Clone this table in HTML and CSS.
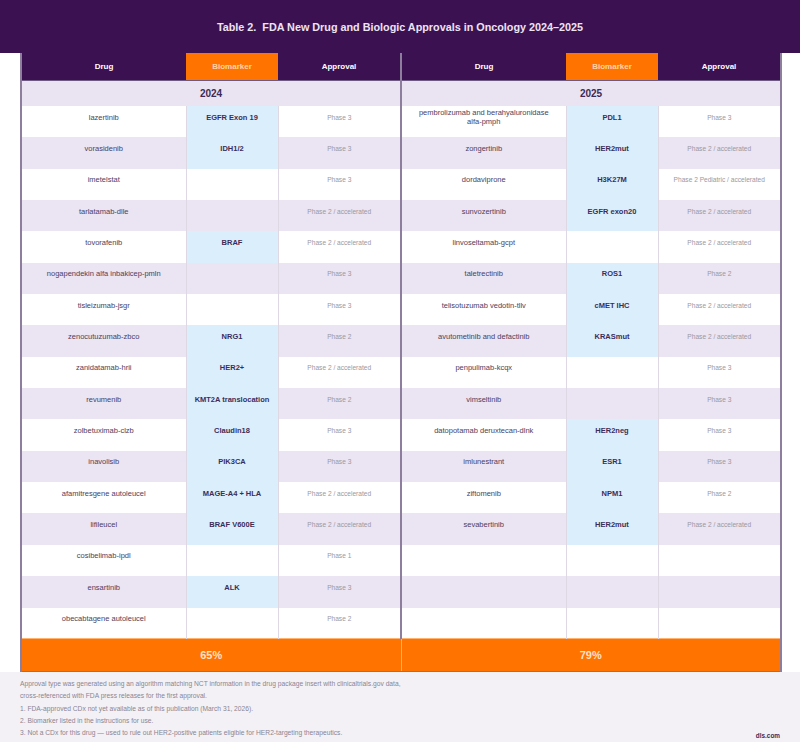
FILE: index.html
```html
<!DOCTYPE html>
<html lang="en">
<head>
<meta charset="utf-8">
<title>Table 2. FDA New Drug and Biologic Approvals in Oncology 2024–2025</title>
<link rel="stylesheet" href="styles.css">
</head>
<body>
<header class="banner">
  <h1 class="title">Table 2.&nbsp; FDA New Drug and Biologic Approvals in Oncology 2024–2025</h1>
</header>
<main class="wrap">
  <table class="approvals">
    <colgroup>
      <col class="c-drug"><col class="c-bio"><col class="c-appr">
      <col class="c-drug"><col class="c-bio"><col class="c-appr">
    </colgroup>
    <thead>
      <tr class="head">
        <th>Drug</th><th class="bio-h">Biomarker</th><th>Approval</th>
        <th class="split">Drug</th><th class="bio-h">Biomarker</th><th>Approval</th>
      </tr>
      <tr class="year">
        <th colspan="3">2024</th>
        <th colspan="3" class="split">2025</th>
      </tr>
    </thead>
    <tbody>
      <tr><td class="drug">lazertinib</td><td class="bio has">EGFR Exon 19</td><td class="appr">Phase 3</td>
          <td class="drug split">pembrolizumab and berahyaluronidase <span class="nowrap">alfa-pmph</span></td><td class="bio has">PDL1</td><td class="appr">Phase 3</td></tr>
      <tr><td class="drug">vorasidenib</td><td class="bio has">IDH1/2</td><td class="appr">Phase 3</td>
          <td class="drug split">zongertinib</td><td class="bio has">HER2mut</td><td class="appr">Phase 2 / accelerated</td></tr>
      <tr><td class="drug">imetelstat</td><td class="bio"></td><td class="appr">Phase 3</td>
          <td class="drug split">dordaviprone</td><td class="bio has">H3K27M</td><td class="appr">Phase 2 Pediatric / accelerated</td></tr>
      <tr><td class="drug">tarlatamab-dlle</td><td class="bio"></td><td class="appr">Phase 2 / accelerated</td>
          <td class="drug split">sunvozertinib</td><td class="bio has">EGFR exon20</td><td class="appr">Phase 2 / accelerated</td></tr>
      <tr><td class="drug">tovorafenib</td><td class="bio has">BRAF</td><td class="appr">Phase 2 / accelerated</td>
          <td class="drug split">linvoseltamab-gcpt</td><td class="bio"></td><td class="appr">Phase 2 / accelerated</td></tr>
      <tr><td class="drug">nogapendekin alfa inbakicep-pmln</td><td class="bio"></td><td class="appr">Phase 3</td>
          <td class="drug split">taletrectinib</td><td class="bio has">ROS1</td><td class="appr">Phase 2</td></tr>
      <tr><td class="drug">tisleizumab-jsgr</td><td class="bio"></td><td class="appr">Phase 3</td>
          <td class="drug split">telisotuzumab vedotin-tllv</td><td class="bio has">cMET IHC</td><td class="appr">Phase 2 / accelerated</td></tr>
      <tr><td class="drug">zenocutuzumab-zbco</td><td class="bio has">NRG1</td><td class="appr">Phase 2</td>
          <td class="drug split">avutometinib and defactinib</td><td class="bio has">KRASmut</td><td class="appr">Phase 2 / accelerated</td></tr>
      <tr><td class="drug">zanidatamab-hrii</td><td class="bio has">HER2+</td><td class="appr">Phase 2 / accelerated</td>
          <td class="drug split">penpulimab-kcqx</td><td class="bio"></td><td class="appr">Phase 3</td></tr>
      <tr><td class="drug">revumenib</td><td class="bio has">KMT2A translocation</td><td class="appr">Phase 2</td>
          <td class="drug split">vimseltinib</td><td class="bio"></td><td class="appr">Phase 3</td></tr>
      <tr><td class="drug">zolbetuximab-clzb</td><td class="bio has">Claudin18</td><td class="appr">Phase 3</td>
          <td class="drug split">datopotamab deruxtecan-dlnk</td><td class="bio has">HER2neg</td><td class="appr">Phase 3</td></tr>
      <tr><td class="drug">inavolisib</td><td class="bio has">PIK3CA</td><td class="appr">Phase 3</td>
          <td class="drug split">imlunestrant</td><td class="bio has">ESR1</td><td class="appr">Phase 3</td></tr>
      <tr><td class="drug">afamitresgene autoleucel</td><td class="bio has">MAGE-A4 + HLA</td><td class="appr">Phase 2 / accelerated</td>
          <td class="drug split">ziftomenib</td><td class="bio has">NPM1</td><td class="appr">Phase 2</td></tr>
      <tr><td class="drug">lifileucel</td><td class="bio has">BRAF V600E</td><td class="appr">Phase 2 / accelerated</td>
          <td class="drug split">sevabertinib</td><td class="bio has">HER2mut</td><td class="appr">Phase 2 / accelerated</td></tr>
      <tr><td class="drug">cosibelimab-ipdl</td><td class="bio"></td><td class="appr">Phase 1</td>
          <td class="drug split"></td><td class="bio"></td><td class="appr"></td></tr>
      <tr><td class="drug">ensartinib</td><td class="bio has">ALK</td><td class="appr">Phase 3</td>
          <td class="drug split"></td><td class="bio"></td><td class="appr"></td></tr>
      <tr><td class="drug">obecabtagene autoleucel</td><td class="bio"></td><td class="appr">Phase 2</td>
          <td class="drug split"></td><td class="bio"></td><td class="appr"></td></tr>
    </tbody>
    <tfoot>
      <tr class="total">
        <td colspan="3">65%</td>
        <td colspan="3" class="split">79%</td>
      </tr>
    </tfoot>
  </table>
</main>
<footer class="notes">
  <div class="note-text">
    <p>Approval type was generated using an algorithm matching NCT information in the drug package insert with clinicaltrials.gov data,</p>
    <p>cross-referenced with FDA press releases for the first approval.</p>
    <p>1. FDA-approved CDx not yet available as of this publication (March 31, 2026).</p>
    <p>2. Biomarker listed in the instructions for use.</p>
    <p>3. Not a CDx for this drug — used to rule out HER2-positive patients eligible for HER2-targeting therapeutics.</p>
    <p>4. Package insert states no FDA-approved CDx is available, but one is listed on the FDA approved CDx website (as of March 31, 2026).</p>
  </div>
  <div class="brand">dls.com</div>
</footer>
</body>
</html>
```

FILE: styles.css
```css
* { box-sizing: border-box; }

html, body {
  margin: 0;
  padding: 0;
  background: #ffffff;
  font-family: "Liberation Sans", Arial, sans-serif;
}

.banner {
  height: 53px;
  background: #3c1152;
  display: flex;
  align-items: center;
  justify-content: center;
}

.title {
  margin: 0;
  font-size: 10.8px;
  font-weight: bold;
  color: #ece4f4;
}

.wrap {
  padding: 0 20px;
  background: #ffffff;
}

.approvals {
  width: 760px;
  border-collapse: collapse;
  table-layout: fixed;
  border-left: 2px solid #8c7e9c;
  border-right: 2px solid #8c7e9c;
}

.c-drug { width: 165px; }
.c-bio { width: 92px; }
.c-appr { width: 123px; }

.approvals th,
.approvals td {
  padding: 0;
  text-align: center;
  vertical-align: middle;
}

.approvals .head th {
  height: 27px;
  background: #3c1152;
  color: #ffffff;
  font-size: 8px;
  font-weight: bold;
  border-bottom: 1px solid #6d5a82;
}

.approvals .head th.bio-h {
  background: #ff7400;
  color: #ffd3a6;
}

.approvals .year th {
  height: 26px;
  background: #e9e3f2;
  color: #3d2a55;
  font-size: 10px;
  font-weight: bold;
}

.approvals tbody tr { height: 31.35px; }
.approvals tbody tr:nth-child(odd) td { background: #ffffff; }
.approvals tbody tr:nth-child(even) td { background: #eae4f3; }

.approvals tbody td {
  padding: 0 8px 9px;
  line-height: 9px;
  border-left: 1px solid #ddd8e3;
}

.approvals tbody td.drug {
  font-size: 7.5px;
  color: #4d4160;
}

.approvals tbody td.bio {
  font-size: 7.5px;
  font-weight: bold;
  color: #3b2d58;
}

.approvals tbody tr td.bio.has { background: #dbeefc; }

.approvals tbody td.appr {
  font-size: 6.6px;
  color: #9b98a0;
}

.nowrap { white-space: nowrap; }

.approvals .split { border-left: 2px solid #8c7e9c; }
.approvals tbody td.split { border-left: 2px solid #8c7e9c; }

.approvals .total td {
  height: 33px;
  background: #ff7400;
  color: #ffe2c6;
  font-size: 11px;
  font-weight: bold;
  border-top: 1px solid #ffb36e;
  border-bottom: 1px solid #c9651c;
}

.approvals .total td.split { border-left: 1px solid #ffb067; }

.notes {
  background: #f3f1f6;
  padding: 6px 20px 14px;
  display: flex;
  justify-content: space-between;
  align-items: flex-start;
}

.note-text p {
  margin: 0;
  font-size: 6.7px;
  line-height: 12.1px;
  color: #8a8592;
  white-space: nowrap;
}

.brand {
  margin-top: 52px;
  font-size: 6.4px;
  line-height: 12px;
  font-weight: bold;
  color: #3c2a57;
}
```
